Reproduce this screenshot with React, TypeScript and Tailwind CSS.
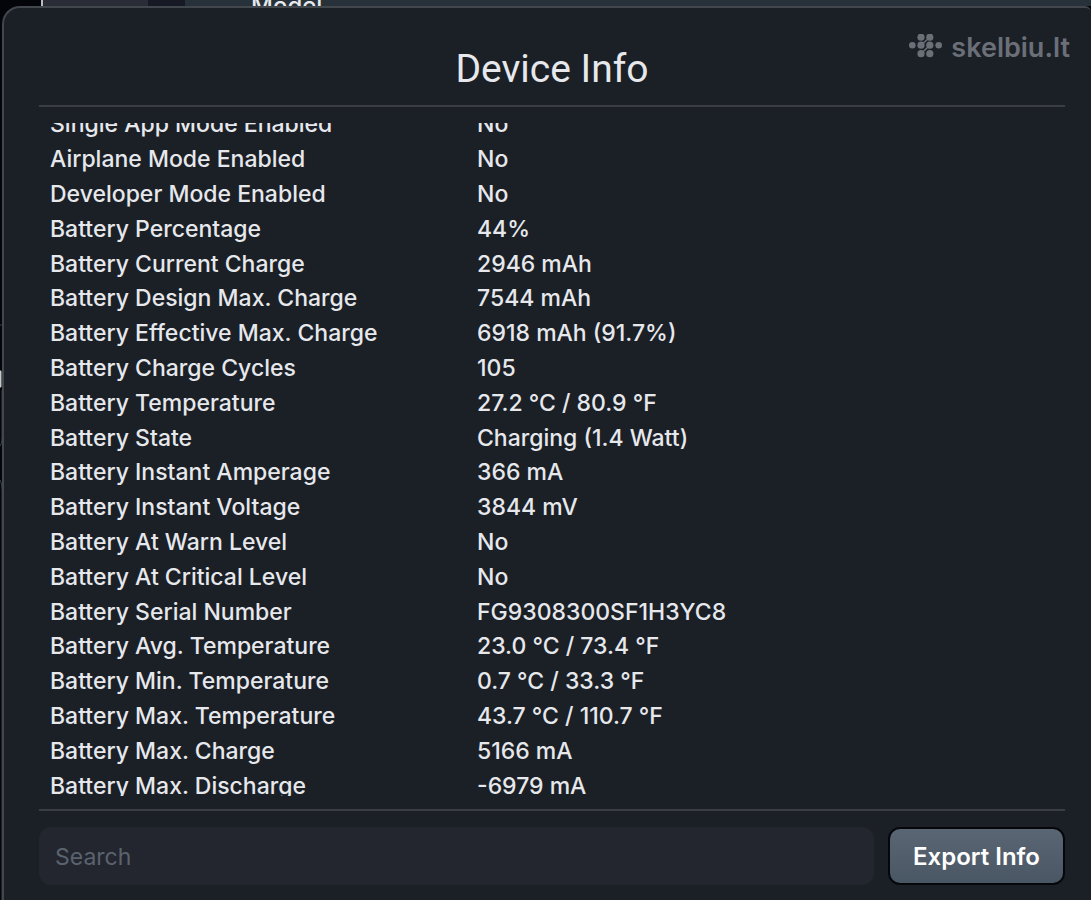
const rows: [string, string][] = [
  ["Single App Mode Enabled", "No"],
  ["Airplane Mode Enabled", "No"],
  ["Developer Mode Enabled", "No"],
  ["Battery Percentage", "44%"],
  ["Battery Current Charge", "2946 mAh"],
  ["Battery Design Max. Charge", "7544 mAh"],
  ["Battery Effective Max. Charge", "6918 mAh (91.7%)"],
  ["Battery Charge Cycles", "105"],
  ["Battery Temperature", "27.2 °C / 80.9 °F"],
  ["Battery State", "Charging (1.4 Watt)"],
  ["Battery Instant Amperage", "366 mA"],
  ["Battery Instant Voltage", "3844 mV"],
  ["Battery At Warn Level", "No"],
  ["Battery At Critical Level", "No"],
  ["Battery Serial Number", "FG9308300SF1H3YC8"],
  ["Battery Avg. Temperature", "23.0 °C / 73.4 °F"],
  ["Battery Min. Temperature", "0.7 °C / 33.3 °F"],
  ["Battery Max. Temperature", "43.7 °C / 110.7 °F"],
  ["Battery Max. Charge", "5166 mA"],
  ["Battery Max. Discharge", "-6979 mA"],
];

function Logo() {
  return (
    <div className="absolute top-5 right-[21px] flex items-center gap-2 text-[#6b6f78]">
      <svg className="h-7 w-[34px]" viewBox="0 1 34 28" fill="currentColor" aria-hidden="true">
        <circle cx="3.3" cy="12.2" r="3.3" />
        <circle cx="12" cy="4.2" r="3.6" />
        <circle cx="20.8" cy="4.2" r="3.6" />
        <circle cx="12" cy="12.2" r="3.6" />
        <circle cx="20.8" cy="12.2" r="3.6" />
        <circle cx="12" cy="20.7" r="3.6" />
        <circle cx="20.8" cy="20.7" r="3.6" />
        <circle cx="29.7" cy="12.2" r="3.3" />
        <path d="M12 12.2L20.8 4.2M12 20.7L20.8 12.2" stroke="currentColor" strokeWidth="1.5" />
      </svg>
      <span className="text-[27px] leading-10 font-semibold">skelbiu.lt</span>
    </div>
  );
}

function WindowEdge() {
  return (
    <svg className="absolute top-0 left-0 h-[900px] w-1" viewBox="0 0 4 900" fill="none" stroke="#3c4047" aria-hidden="true">
      <path d="M0 325H2" />
      <path d="M0 446Q2 444 2 438V390" />
      <path d="M0 480Q2 483 2 490V900" />
      <path d="M0 371H1V387H0Z" fill="#c4c8c6" stroke="#c4c8c6" />
    </svg>
  );
}

export default function App() {
  return (
    <div className="relative min-h-screen overflow-hidden bg-[#04050a] font-['Inter',sans-serif] text-[#e6e8ec]">
      <WindowEdge />
      <div className="flex h-[6px] overflow-hidden pl-[41px]">
        <div className="w-[107px] border-l-2 border-[#b9bbc0] bg-[#2b2d36]" />
        <div className="w-[37px] bg-[#171a24]" />
        <div className="flex flex-1 items-start bg-[#263139] pl-[66px]">
          <span className="-mt-1 text-2xl leading-5 font-medium">Model</span>
        </div>
      </div>
      <main className="relative ml-[2px] flex min-h-[calc(100vh-6px)] flex-col rounded-tl-[18px] rounded-tr-md border-2 border-r-0 border-b-0 border-[#42464d] bg-[#1b1f26] pt-[34px] pr-[26px] pb-[15px] pl-[35px]">
        <Logo />
        <h1 className="pb-[9px] text-center font-['Roboto',sans-serif] text-[39px] leading-[54px]">Device Info</h1>
        <hr className="border-t-2 border-[#3a3d45]" />
        <div className="mt-4 mb-[13px] h-[673px] overflow-hidden">
          <table className="-mt-4 h-[696px] w-full table-fixed border-collapse text-left text-[23px] leading-[34px]">
            <tbody>
              {rows.map(([label, value]) => (
                <tr key={label}>
                  <th scope="row" className="w-[438px] p-0 pl-[11px] font-medium">{label}</th>
                  <td className="p-0 font-medium">{value}</td>
                </tr>
              ))}
            </tbody>
          </table>
        </div>
        <hr className="border-t-2 border-[#3a3d45]" />
        <div className="flex gap-[14px] pt-4">
          <input
            type="search"
            aria-label="Search"
            placeholder="Search"
            className="h-[58px] min-w-0 flex-1 rounded-xl bg-[#23262e] px-4 pt-0.5 text-[23px] placeholder:text-[#5a636e]"
          />
          <button
            type="button"
            className="h-[58px] w-[177px] rounded-xl border-2 border-[#06070b] bg-linear-to-b from-[#5b6675] to-[#495663] pt-0.5 text-2xl font-semibold text-white"
          >
            Export Info
          </button>
        </div>
      </main>
    </div>
  );
}
